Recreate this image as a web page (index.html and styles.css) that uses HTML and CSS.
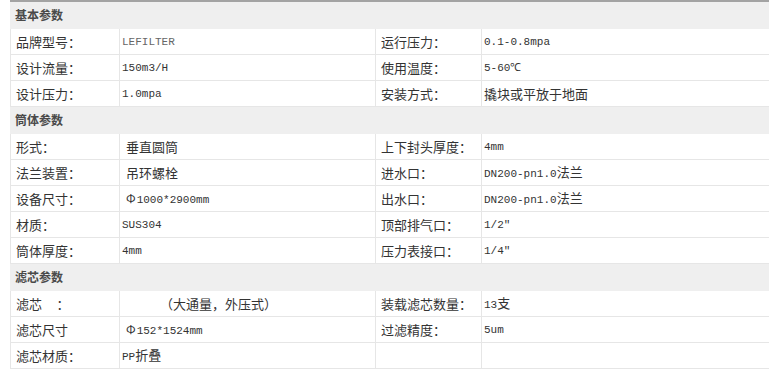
FILE: index.html
```html
<!DOCTYPE html>
<html lang="zh">
<head>
<meta charset="utf-8">
<title>参数</title>
<link rel="stylesheet" href="styles.css">
</head>
<body>
<table class="spec">
  <colgroup>
    <col class="c1"><col class="c2"><col class="c3"><col class="c4">
  </colgroup>
  <tr class="head"><td colspan="4">基本参数</td></tr>
  <tr><td class="lab">品牌型号：</td><td class="val mono gray">LEFILTER</td><td class="lab">运行压力：</td><td class="val mono">0.1-0.8mpa</td></tr>
  <tr><td class="lab">设计流量：</td><td class="val mono">150m3/H</td><td class="lab">使用温度：</td><td class="val mono">5-60℃</td></tr>
  <tr><td class="lab">设计压力：</td><td class="val mono">1.0mpa</td><td class="lab">安装方式：</td><td class="val cn">撬块或平放于地面</td></tr>
  <tr class="head"><td colspan="4">筒体参数</td></tr>
  <tr><td class="lab">形式：</td><td class="val cn ind">垂直圆筒</td><td class="lab">上下封头厚度：</td><td class="val mono">4mm</td></tr>
  <tr><td class="lab">法兰装置：</td><td class="val cn ind">吊环螺栓</td><td class="lab">进水口：</td><td class="val mono">DN200-pn1.0<span class="cn">法兰</span></td></tr>
  <tr><td class="lab">设备尺寸：</td><td class="val mono ind"><span class="phi">Φ</span>1000*2900mm</td><td class="lab">出水口：</td><td class="val mono">DN200-pn1.0<span class="cn">法兰</span></td></tr>
  <tr><td class="lab">材质：</td><td class="val mono">SUS304</td><td class="lab">顶部排气口：</td><td class="val mono">1/2″</td></tr>
  <tr><td class="lab">筒体厚度：</td><td class="val mono">4mm</td><td class="lab">压力表接口：</td><td class="val mono">1/4″</td></tr>
  <tr class="head"><td colspan="4">滤芯参数</td></tr>
  <tr><td class="lab">滤芯&nbsp;&nbsp;&nbsp;&nbsp;&nbsp;：</td><td class="val cn far">（大通量，外压式）</td><td class="lab">装载滤芯数量：</td><td class="val mono">13<span class="cn">支</span></td></tr>
  <tr><td class="lab">滤芯尺寸</td><td class="val mono ind"><span class="phi">Φ</span>152*1524mm</td><td class="lab">过滤精度：</td><td class="val mono">5um</td></tr>
  <tr><td class="lab">滤芯材质：</td><td class="val mono">PP<span class="cn">折叠</span></td><td class="lab"></td><td class="val"></td></tr>
</table>
</body>
</html>
```

FILE: styles.css
```css
html, body {
  margin: 0;
  padding: 0;
  background: #ffffff;
}

.spec {
  margin-left: 10px;
  width: 770px;
  border-collapse: collapse;
  table-layout: fixed;
  border-top: 2px solid #a3a3a3;
  font-family: "Noto Sans CJK SC", "Noto Sans", sans-serif;
  font-size: 12px;
  color: #333333;
}

.c1 { width: 109px; }
.c2 { width: 256px; }
.c3 { width: 106px; }
.c4 { width: 299px; }

.spec td {
  height: 25px;
  padding: 0;
  border: 1px solid #e6e6e6;
  vertical-align: middle;
  white-space: nowrap;
  line-height: 16px;
}

.spec tr.head td {
  background: #efefef;
  font-weight: bold;
  color: #4a4a4a;
  padding-left: 4px;
  height: 26px;
  border-color: #efefef;
}

.spec td.lab {
  padding-left: 5px;
  font-size: 13px;
}

.spec td.val {
  padding-left: 2px;
}

.spec td.ind {
  padding-left: 6px;
}

.spec td.far {
  padding-left: 40px;
}

.mono {
  font-family: "Liberation Mono", "DejaVu Sans Mono", monospace;
  font-size: 11px;
}

.phi {
  font-family: "Noto Sans CJK SC", sans-serif;
  font-size: 12px;
  margin-right: 1px;
}

.gray {
  color: #666666;
}

.cn {
  font-family: "Noto Sans CJK SC", sans-serif;
  font-size: 13px;
}
```
